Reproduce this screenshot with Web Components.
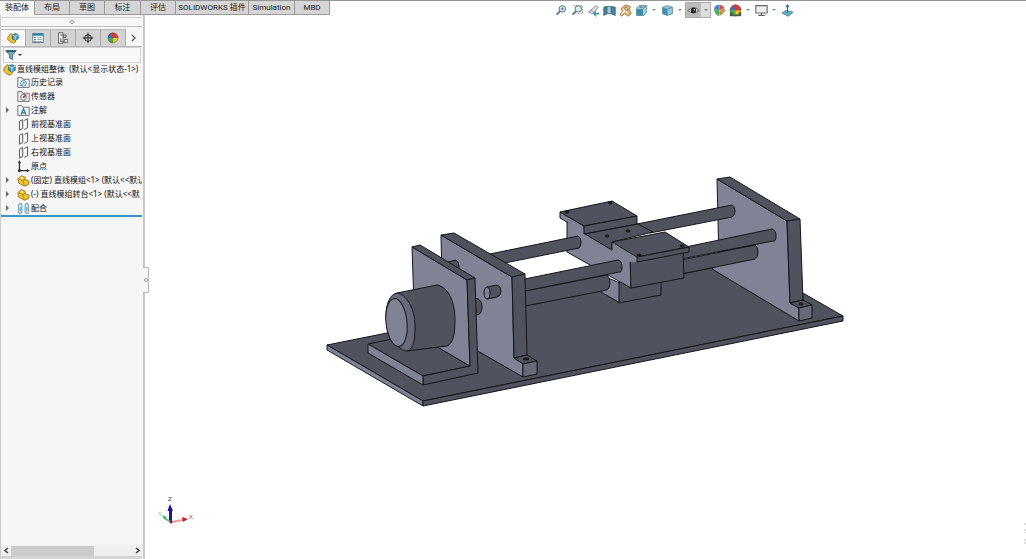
<!DOCTYPE html>
<html lang="zh-CN">
<head>
<meta charset="utf-8">
<title>直线模组整体</title>
<style>
html,body{height:100%}
body{margin:0;background:#fff;color:#222;font:8px/12px "Noto Sans","Noto Sans CJK SC",sans-serif}
</style>
</head>
<body>
<cad-app></cad-app>
<script>
const define=(name,html,setup)=>customElements.define(name,class extends HTMLElement{
  constructor(){
    super();
    this.attachShadow({mode:"open"}).innerHTML=html;
  }
  connectedCallback(){ if(setup) setup(this,this.shadowRoot); }
});

const zoomLens='<circle cx="9" cy="6" r="4" fill="#dceaf2" stroke="#52738a" stroke-width="1.2"/><path d="M6 9 2 13" stroke="#52738a" stroke-width="2.2"/>';
const part='<path d="M1 6 5 2 10 4 10 7 15 9 14 13 9 15 2 11Z" fill="#f2c230" stroke="#8c6a10"/><path d="M2 6 7 8 9 14M7 8 10 7" fill="none" stroke="#a57c14"/><circle cx="6" cy="5" r="1.4" fill="#fff3b0"/>';
const folder='<path d="M1 2h5l1 2h8v10H1Z" fill="#f4f7f9" stroke="#555"/>';
const plane='<path d="M3 4 7 2V13L3 15ZM9 3 13 1V12L9 14" fill="none" stroke="#555" stroke-width="1.2"/>';
const ball='<circle cx="8" cy="8" r="7" fill="#e9c62c"/><path d="M8 8V1A7 7 0 0 0 1 8Z" fill="#3274c5"/><path d="M8 8 4 2A7 7 0 0 1 15 8Z" fill="#d93b33"/><path d="M8 8H1A7 7 0 0 0 8 15Z" fill="#4ca64b"/><circle cx="8" cy="8" r="6.500" fill="none" stroke="#555" stroke-opacity=".6"/>';
const ICONS={
  assembly:'<path d="M1 7 5 2 9 4 8 8 12 12 9 15 4 13 1 10Z" fill="#f1c130" stroke="#94700f"/><path d="M7 4 11 2 15 4V9L11 11 7 9Z" fill="#4aa0c4" stroke="#1f5f7e"/><path d="M7 4 11 6 15 4M11 6V11" fill="none" stroke="#d5eef8"/>',
  part, plane,
  history:folder+'<circle cx="8" cy="9" r="3.6" fill="#dcecf4" stroke="#3c7fa0"/><path d="M8 7v2l2-1M4 12l3-2" fill="none" stroke="#3c7fa0"/>',
  sensor:folder+'<circle cx="8" cy="9" r="3.6" fill="#fff" stroke="#444"/><path d="M8 9 11 6" stroke="#c33" stroke-width="2"/><circle cx="8" cy="9" r="1" fill="#444"/>',
  note:folder+'<path d="M5 13 8 6 11 13M6 11H10" fill="none" stroke="#27769b" stroke-width="1.5"/>',
  origin:'<path d="M3 2V13H14" fill="none" stroke="#333" stroke-width="1.6"/><path d="M1 4 3 0 5 4ZM12 11 16 13 12 15Z" fill="#333"/><circle cx="3" cy="13" r="2" fill="#333"/>',
  mates:'<path d="M6 5V12A2 2 0 0 1 2 12V4A2 2 0 0 1 6 4V5M4 6V11M14 5V12A2 2 0 0 1 10 12V4A2 2 0 0 1 14 4V5M12 6V11" fill="none" stroke="#5e9dbb" stroke-width="1.3"/>',
  props:'<path d="M1 2H15V14H1Z" fill="#fff" stroke="#33586e"/><path d="M1 2H15V5H1Z" fill="#2e86ad"/><path d="M3 7.500H5M3 10H5M3 12.500H5" stroke="#1d6990" stroke-width="1.5"/><path d="M7 7.500H13M7 10H13M7 12.500H13" stroke="#6b8796"/>',
  config:'<path d="M2 1H8V15H2Z" fill="#eee" stroke="#444"/><path d="M4 4H9V7H12M5 8V13H10" fill="none" stroke="#444"/><path d="M9 4h3v3H9ZM10 10h4v4h-4Z" fill="#fff" stroke="#444"/>',
  cross:'<circle cx="8" cy="8" r="4.500" fill="none" stroke="#222" stroke-width="1.3"/><path d="M8 1V15M1 8H15" stroke="#222" stroke-width="1.3"/>',
  appearance:ball,
  funnel:'<path d="M1 2H15L10 8V14L6 12V8Z" fill="#78a9be" stroke="#285c74"/><path d="M2 3H14" stroke="#285c74" stroke-width="2"/>',
  fit:zoomLens+'<path d="M7 6h4M9 4v4" stroke="#52738a"/>',
  area:'<path d="M3 2H14V12H7" fill="none" stroke="#888" stroke-dasharray="2 1"/>'+zoomLens,
  previous:'<path d="M2 10 11 2 14 4 7 12Z" fill="#dce3e7" stroke="#71818b"/><path d="M2 10 5 7 8 10" fill="none" stroke="#71818b"/><path d="M7 12 11 8V11H15V13H11V16Z" fill="#4d95b5"/>',
  section:'<path d="M1 4 5 3V12L1 14ZM10 3 15 4V14L10 12Z" fill="#4388a6" stroke="#285b73"/><path d="M5 3H10V12H5Z" fill="#a8cad7" stroke="#416b7d"/>',
  dynamic:'<path d="M2 6 8 1 14 3 13 7 15 12 11 15 7 12 3 15 1 12 5 9Z" fill="#e4b063" stroke="#93754a"/><path d="M3 12 12 4M5 6 11 12" stroke="#fff" stroke-width="1.5"/><circle cx="9" cy="6" r="2" fill="#e9d6b7" stroke="#866"/>',
  views:'<path d="M2 5 5 2H14V10L11 14H2Z" fill="#b3d5e1" stroke="#4c7b8e"/><path d="M2 6H10V14H2Z" fill="#3d8fae"/><path d="M10 6 14 2M5 4H12M7 2V5" stroke="#4c7b8e"/>',
  display:'<path d="M2 4 8 2 14 4V12L8 14 2 12Z" fill="#9bc9d9" stroke="#4d7f91"/><path d="M2 4 8 6V14L2 12Z" fill="#3f91af"/><path d="M8 6 14 4" stroke="#4d7f91"/>',
  eye:'<path d="M1 8Q8 1 15 8Q8 14 1 8Z" fill="#eee" stroke="#444"/><circle cx="8" cy="8" r="3.400" fill="#222"/><circle cx="9" cy="7" r="1" fill="#fff"/>',
  edit:'<path d="M8 1A7 7 0 0 1 14 5L8 8Z" fill="#df4e42"/><path d="M8 1A7 7 0 0 0 1 6L8 8Z" fill="#4489c5"/><path d="M1 6 8 8V15Q2 13 1 6Z" fill="#55a95a"/><path d="M14 5 8 8V15Q13 12 14 5Z" fill="#e5c443"/><path d="M8 10 13 6 15 8 10 13Z" fill="#e0a04d" stroke="#876"/>',
  scene:ball+'<path d="M1 10H4V13H12V10H15V15H1Z" fill="#465c52"/>',
  monitor:'<path d="M1 2H15V11H1Z" fill="#eee" stroke="#666" stroke-width="1.3"/><path d="M8 11V14M4 14H12" stroke="#666" stroke-width="1.5"/>',
  normal:'<path d="M1 11 6 8 15 10 9 15Z" fill="#69adc7" stroke="#3e819b"/><path d="M8 11V2M6 4 8 1 10 4" fill="none" stroke="#35718c" stroke-width="1.3"/>'
};

define("cad-icon",`<style>:host{display:block;flex:none;width:var(--icon,12px);height:var(--icon,12px)}svg{display:block;width:100%;height:100%}</style><svg viewBox="0 0 16 16" aria-hidden="true"></svg>`,
  (el,root)=>{root.querySelector("svg").innerHTML=ICONS[el.getAttribute("name")]||""});

define("command-tab",`<style>
:host{display:block}
button{box-sizing:border-box;width:100%;height:14px;margin:0;padding:0;border:0;border-right:1px solid #999;border-bottom:1px solid #999;background:#d5d5d5;color:#222;font:inherit;line-height:12px;white-space:nowrap}
:host([selected]) button{background:#f6f6f6;border-bottom-color:#f6f6f6}
</style><button type="button"><slot></slot></button>`);

define("command-tabs",`<style>
:host{display:grid;grid-template-columns:repeat(2,35px) 35px 36px 35px 73px 46px 35px;border-top:1px solid #969696;font-family:Roboto,"Noto Sans CJK SC",sans-serif}
</style>
<command-tab selected>装配体</command-tab><command-tab>布局</command-tab><command-tab>草图</command-tab><command-tab>标注</command-tab><command-tab>评估</command-tab><command-tab>SOLIDWORKS 插件</command-tab><command-tab>Simulation</command-tab><command-tab>MBD</command-tab>`);

define("manager-tabs",`<style>
:host{display:flex;height:17px;border-bottom:1px solid #b9b9b9}
button{box-sizing:border-box;flex:1 1 25px;display:grid;place-items:center;padding:0;margin:0;border:0;border-right:1px solid #aaa;border-top:1px solid #bbb;background:#d3d3d3}
button.on{background:#f7f7f7}
button.more{flex:0 0 16px;border:0;background:none}
svg{width:6px;height:8px}
</style>
<button class="on" type="button" aria-label="设计树"><cad-icon name="assembly"></cad-icon></button>
<button type="button" aria-label="属性"><cad-icon name="props"></cad-icon></button>
<button type="button" aria-label="配置"><cad-icon name="config"></cad-icon></button>
<button type="button" aria-label="尺寸"><cad-icon name="cross"></cad-icon></button>
<button type="button" aria-label="外观"><cad-icon name="appearance"></cad-icon></button>
<button class="more" type="button" aria-label="更多"><svg viewBox="0 0 6 8"><path d="M1 1 4 4 1 7" fill="none" stroke="#555" stroke-width="1.2"/></svg></button>`);

define("tree-filter",`<style>
:host{display:flex;align-items:center;height:14px;margin:0 1px 0 2px;border:1px solid #d2d2d2;background:#f8f8f8}
button{display:flex;align-items:center;gap:1px;padding:0 0 0 1px;border:0;background:none}
i{border:2px solid transparent;border-top-color:#333;border-bottom:0}
input{flex:1;min-width:0;height:12px;box-sizing:border-box;padding:0;border:0;background:none;font:inherit;outline:0}
</style><button type="button" aria-label="过滤器"><cad-icon name="funnel"></cad-icon><i></i></button><input type="text" aria-label="过滤">`);

define("tree-item",`<style>
:host{display:flex;align-items:center;height:14px;padding-left:4px;white-space:nowrap;line-height:14px;color:#111}
:host([root]){height:12px;padding-left:2px}
:host([root]) .arrow{display:none}
.arrow{flex:none;width:5px;height:6px;margin-right:7px}
cad-icon{margin-right:1px}
:host(:not([open])) .arrow{visibility:hidden}
</style><svg class="arrow" viewBox="0 0 5 6"><path d="M1 0 4 3 1 6Z" fill="#666"/></svg><cad-icon></cad-icon><span><slot></slot></span>`,
  (el,root)=>{const i=root.querySelector("cad-icon");i.setAttribute("name",el.getAttribute("icon"));i.shadowRoot.querySelector("svg").innerHTML=ICONS[el.getAttribute("icon")]});

define("feature-tree",`<style>
:host{display:block;overflow:hidden;border-bottom:2px solid #3c98c2;--icon:13px}
</style>
<tree-item root icon="assembly">直线模组整体&nbsp; (默认&lt;显示状态-1&gt;)</tree-item>
<tree-item icon="history">历史记录</tree-item>
<tree-item icon="sensor">传感器</tree-item>
<tree-item open icon="note">注解</tree-item>
<tree-item icon="plane">前视基准面</tree-item>
<tree-item icon="plane">上视基准面</tree-item>
<tree-item icon="plane">右视基准面</tree-item>
<tree-item icon="origin">原点</tree-item>
<tree-item open icon="part">(固定) 直线模组&lt;1&gt; (默认&lt;&lt;默认</tree-item>
<tree-item open icon="part">(-) 直线模组转台&lt;1&gt; (默认&lt;&lt;默</tree-item>
<tree-item open icon="mates">配合</tree-item>`);

define("side-panel",`<style>
:host{position:relative;box-sizing:border-box;display:flex;flex-direction:column;background:#f6f6f6;border-left:1px solid #ccc;border-right:2px solid #c6c6c6;padding-right:1px}
.grip{display:grid;place-items:center;height:8px;margin-top:2px;margin-bottom:2px;border-top:1px solid #d0d0d0;border-bottom:1px solid #c0c0c0}
.grip i,.handle i{width:2px;height:2px;border:1px solid #999;border-radius:50%}
.space{flex:1}
.scroll{display:flex;align-items:center;height:11px;background:#efefef}
.scroll button{flex:none;display:grid;place-items:center;width:10px;height:11px;padding:0;border:0;background:none}
.scroll svg{width:5px;height:7px}
.track{flex:1;height:10px}
.thumb{width:69%;height:10px;background:#cbcbcb}
.foot{height:2px;border-top:1px solid #d0d0d0;background:#d6d6d6}
.handle{position:absolute;left:100%;top:252px;width:5px;height:24px;display:grid;place-items:center;background:#f6f6f6;border:1px solid #bbb;border-left:0}
</style>
<div class="grip"><i></i></div>
<manager-tabs></manager-tabs><tree-filter></tree-filter><feature-tree></feature-tree>
<div class="space"></div>
<div class="scroll"><button type="button" aria-label="向左"><svg viewBox="0 0 5 7"><path d="M4 1 1 3.500 4 6" fill="none" stroke="#444" stroke-width="1.500"/></svg></button><div class="track"><div class="thumb"></div></div><button type="button" aria-label="向右"><svg viewBox="0 0 5 7"><path d="M1 1 4 3.500 1 6" fill="none" stroke="#444" stroke-width="1.500"/></svg></button></div>
<div class="foot"></div><div class="handle"><i></i></div>`);

define("view-toolbar",`<style>
:host{display:flex;align-items:center;height:16px;--icon:13px}
button{box-sizing:border-box;width:16px;height:16px;display:grid;place-items:center;padding:0;border:0;background:none}
button.menu{width:10px}
i{border:2px solid transparent;border-top-color:#888;border-bottom:0}
.on{display:flex;box-sizing:border-box;width:26px;border:1px solid #aaa;height:16px;background:#ddd}
.on button{height:14px;flex:1 1 15px;background:#bbb}
.on button.menu{flex:0 0 9px;background:none}
</style>
<button aria-label="整屏显示全图"><cad-icon name="fit"></cad-icon></button><button aria-label="局部放大"><cad-icon name="area"></cad-icon></button><button aria-label="上一视图"><cad-icon name="previous"></cad-icon></button><button aria-label="剖面视图"><cad-icon name="section"></cad-icon></button><button aria-label="动态注解"><cad-icon name="dynamic"></cad-icon></button><button aria-label="视图定向"><cad-icon name="views"></cad-icon></button><button class="menu" aria-label="更多视图"><i></i></button><button aria-label="显示样式"><cad-icon name="display"></cad-icon></button><button class="menu" aria-label="更多样式"><i></i></button><div class="on"><button aria-label="隐藏或显示"><cad-icon name="eye"></cad-icon></button><button class="menu" aria-label="更多项目"><i></i></button></div><button aria-label="编辑外观"><cad-icon name="edit"></cad-icon></button><button aria-label="应用布景"><cad-icon name="scene"></cad-icon></button><button class="menu" aria-label="更多布景"><i></i></button><button aria-label="视图设定"><cad-icon name="monitor"></cad-icon></button><button class="menu" aria-label="更多设定"><i></i></button><button aria-label="正视于"><cad-icon name="normal"></cad-icon></button>`);

define("model-view",`<style>
:host{display:block;position:relative;background:#fff;overflow:hidden;border-top:1px solid #969696}
.scene{display:block;width:100%;height:100%}
view-toolbar{position:absolute;top:1px;right:231px}
.d,.l,.m{stroke:#15161b;stroke-width:1;stroke-linejoin:round}
.d{fill:#50525d}.l{fill:#808295}.m{fill:#686a79}
.n{stroke:none}
.h{fill:#2c2d34;stroke:#111}
text{font:6px "Liberation Sans",sans-serif}
</style>
<svg class="scene" viewBox="145 1 881 558" role="img" aria-label="直线模组三维模型">
<!-- base plate -->
<path class="d" d="M327 345 747 261 843 316 423 401Z"/>
<path class="l" d="M327 345 423 401V406L327 350Z"/>
<path class="d" d="M423 401 843 316V321L423 406Z"/>
<!-- right support -->
<path class="l" d="M717 179 787 221 790 303 799 308V321L712 269 719 262Z"/>
<path class="d" d="M717 179 730 177 800 219 787 221Z"/>
<path class="d" d="M787 221 800 219 803 300 790 303Z"/>
<path class="d" d="M790 303 803 300 812 305 799 308Z"/>
<path class="m" d="M799 308 812 305V318L799 321Z"/>
<ellipse class="h" cx="801" cy="304" rx="2" ry="1"/>
<!-- rods, right half -->
<path class="d" d="M637 224 732 205Q735 206 735 211T732 217L650 233Z"/>
<path class="d" d="M676 261 755 245Q758 247 758 252T755 259L676 275Z"/>
<path class="d" d="M676 249 772 229Q776 230 776 236T773 241L676 260Z"/>
<!-- carriage -->
<path class="l" d="M601 292 601 275 620 283V303Z"/>
<path class="d" d="M619 281 661 275V295L619 303Z"/>
<path class="l" d="M567 218 585 233 612 250 612 242 637 258 631 262V288L567 252Z"/>
<path class="l" d="M560 212 584 226V233L567 222 560 218Z"/>
<path class="l n" d="M568 221 584 230V236L568 226Z"/>
<path class="d" d="M560 212 612 201 637 216 584 226Z"/>
<path class="d" d="M584 226 637 216V224L584 234Z"/>
<path class="d" d="M585 234 638 224 653 232 612 242V250Z"/>
<path class="d" d="M630 259 683 250 684 278 631 288Z"/>
<path class="l n" d="M612 242 637 257V262L630 262 612 251Z"/>
<path class="d" d="M612 242 665 232 689 247 637 257Z"/>
<path class="d" d="M637 257 689 247V252L637 262Z"/>
<path d="M612 242V250" stroke="#15161b"/>
<g class="h"><ellipse cx="567" cy="212" rx="2" ry="1"/><ellipse cx="610" cy="203" rx="2" ry="1"/><ellipse cx="607" cy="236" rx="2" ry="1"/><ellipse cx="628" cy="231" rx="2" ry="1"/><ellipse cx="639" cy="255" rx="2" ry="1"/><ellipse cx="682" cy="246" rx="2" ry="1"/></g>
<!-- rods, left half -->
<path class="d" d="M480 256 578 236Q581 237 581 242T579 248L480 268Z"/>
<path class="d" d="M505 295 607 275Q610 278 610 283T607 290L505 310Z"/>
<path class="d" d="M505 283 618 260Q622 261 622 267T619 272L505 295Z"/>
<!-- middle support -->
<path class="l" d="M441 235 512 277 514 358 523 363V377L443 331Z"/>
<path class="d" d="M441 235 454 233 525 274 512 277Z"/>
<path class="d" d="M512 277 525 274 527 355 514 358Z"/>
<path class="d" d="M514 358 527 355 537 361 523 364Z"/>
<path class="m" d="M523 364 537 361V374L523 377Z"/>
<ellipse class="h" cx="526" cy="359" rx="3" ry="1"/>
<path class="d" d="M487 287 497 285Q501 286 501 291T497 297L487 299Z"/>
<ellipse class="l" cx="487" cy="293" rx="3" ry="6"/>
<path class="d" d="M448 262 456 260Q459 262 459 267V272Z"/>
<path class="d" d="M475 298Q482 299 482 307T476 315Z"/>
<!-- motor bracket -->
<path class="d" d="M368 344 416 334 470 366 423 376Z"/>
<path class="l" d="M412 247 467 280 470 366 415 334Z"/>
<path class="d" d="M412 247 420 245 475 278 467 280Z"/>
<path class="d" d="M423 376 470 366 467 280 475 278 478 373 423 385Z"/>
<path class="l" d="M368 344 423 376V385L368 353Z"/>
<!-- motor -->
<path class="d" d="M397 293 437 285C448 287 455 301 455 320 455 334 453 344 447 346L407 351Z"/>
<path class="m" d="M397 293C406 294 415 308 415 326 415 341 413 350 407 351 398 350 386 336 386 315 386 304 390 294 397 293Z"/>
<ellipse class="l" cx="396.500" cy="322.500" rx="10.500" ry="24" transform="rotate(-6 396.500 322.500)"/>
<!-- orientation triad -->
<path d="M170.500 522V508" stroke="#171795" stroke-width="3"/><path d="M167.500 511 170 504 173 511Z" fill="#171795"/>
<path d="M171 522 183 520" stroke="#ec9c9c" stroke-width="2"/><path d="M182 517 188 519 183 522Z" fill="#c62020"/>
<path d="M171 522 164 518" stroke="#58c268" stroke-width="2"/><path d="M162 515 167 517 164 519Z" fill="#43b957"/>
<circle cx="171" cy="522" r="1.500" fill="#7b1e54"/>
<text x="168" y="501" fill="#2929aa">Z</text><text x="189" y="519" fill="#cf3030">X</text><text x="158" y="516" fill="#42bd55">Y</text>
<path d="M1025 523V526M1025 529V533M1025 539V545" stroke="#bbb" stroke-dasharray="2 1"/>
</svg>
<view-toolbar></view-toolbar>`);

define("cad-app",`<style>
:host{display:grid;grid-template:15px minmax(0,1fr)/145px minmax(0,1fr);height:100vh}
command-tabs{grid-area:1/1/2/3;z-index:2;justify-self:start}
side-panel{grid-area:2/1;z-index:1}
model-view{grid-area:1/2/3/3}
</style><model-view></model-view><command-tabs></command-tabs><side-panel></side-panel>`);
</script>
</body>
</html>
